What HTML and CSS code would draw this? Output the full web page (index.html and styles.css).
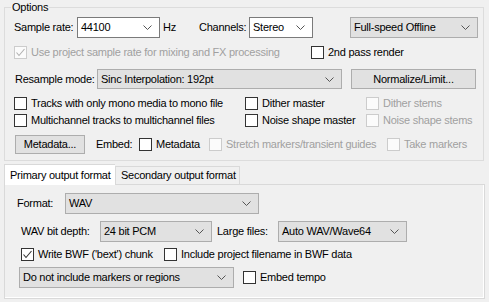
FILE: index.html
```html
<!DOCTYPE html>
<html lang="en">
<head>
  <meta charset="UTF-8">
  <title>Render options</title>
  <link rel="stylesheet" href="styles.css">
</head>
<body>
  <!-- Options group -->
  <fieldset class="group">
    <legend>Options</legend>

    <div class="row row-rate">
      <span class="lbl lbl-rate">Sample rate:</span>
      <div class="combo edit combo-rate">
        <span>44100</span>
        <svg class="chev" width="9" height="5" viewBox="0 0 9 5"><path d="M0.5 0.5 L4.5 4.5 L8.5 0.5"/></svg>
      </div>
      <span class="lbl lbl-hz">Hz</span>
      <span class="lbl lbl-chan">Channels:</span>
      <div class="combo edit combo-chan">
        <span>Stereo</span>
        <svg class="chev" width="9" height="5" viewBox="0 0 9 5"><path d="M0.5 0.5 L4.5 4.5 L8.5 0.5"/></svg>
      </div>
      <div class="combo list combo-speed">
        <span>Full-speed Offline</span>
        <svg class="chev" width="9" height="5" viewBox="0 0 9 5"><path d="M0.5 0.5 L4.5 4.5 L8.5 0.5"/></svg>
      </div>
    </div>

    <div class="row row-check row-project">
      <label class="check disabled item-project">
        <span class="box"><svg width="11" height="11" viewBox="0 0 11 11"><path d="M1.5 5.5 L4 8.5 L9.5 2"/></svg></span>
        Use project sample rate for mixing and FX processing
      </label>
      <label class="check">
        <span class="box"></span>
        2nd pass render
      </label>
    </div>

    <div class="row row-resample">
      <span class="lbl lbl-resample">Resample mode:</span>
      <div class="combo list combo-resample">
        <span>Sinc Interpolation: 192pt</span>
        <svg class="chev" width="9" height="5" viewBox="0 0 9 5"><path d="M0.5 0.5 L4.5 4.5 L8.5 0.5"/></svg>
      </div>
      <button class="btn btn-normalize">Normalize/Limit...</button>
    </div>

    <div class="row row-check row-mono">
      <label class="check col-1"><span class="box"></span>Tracks with only mono media to mono file</label>
      <label class="check col-2"><span class="box"></span>Dither master</label>
      <label class="check disabled"><span class="box"></span>Dither stems</label>
    </div>

    <div class="row row-check row-multi">
      <label class="check col-1"><span class="box"></span>Multichannel tracks to multichannel files</label>
      <label class="check col-2"><span class="box"></span>Noise shape master</label>
      <label class="check disabled"><span class="box"></span>Noise shape stems</label>
    </div>

    <div class="row row-meta">
      <button class="btn btn-meta">Metadata...</button>
      <span class="lbl lbl-embed">Embed:</span>
      <label class="check item-meta"><span class="box"></span>Metadata</label>
      <label class="check disabled item-stretch"><span class="box"></span>Stretch markers/transient guides</label>
      <label class="check disabled"><span class="box"></span>Take markers</label>
    </div>
  </fieldset>

  <!-- Output format tabs -->
  <div class="tabs">
    <div class="tab active">Primary output format</div>
    <div class="tab">Secondary output format</div>
  </div>

  <div class="panel">
    <div class="row row-format">
      <span class="lbl lbl-format">Format:</span>
      <div class="combo list combo-format">
        <span>WAV</span>
        <svg class="chev" width="9" height="5" viewBox="0 0 9 5"><path d="M0.5 0.5 L4.5 4.5 L8.5 0.5"/></svg>
      </div>
    </div>

    <div class="row row-depth">
      <span class="lbl lbl-depth">WAV bit depth:</span>
      <div class="combo list combo-depth">
        <span>24 bit PCM</span>
        <svg class="chev" width="9" height="5" viewBox="0 0 9 5"><path d="M0.5 0.5 L4.5 4.5 L8.5 0.5"/></svg>
      </div>
      <span class="lbl lbl-large">Large files:</span>
      <div class="combo list combo-large">
        <span>Auto WAV/Wave64</span>
        <svg class="chev" width="9" height="5" viewBox="0 0 9 5"><path d="M0.5 0.5 L4.5 4.5 L8.5 0.5"/></svg>
      </div>
    </div>

    <div class="row row-check row-bwf">
      <label class="check item-bwf">
        <span class="box"><svg width="11" height="11" viewBox="0 0 11 11"><path d="M1.5 5.5 L4 8.5 L9.5 2"/></svg></span>
        Write BWF ('bext') chunk
      </label>
      <label class="check"><span class="box"></span>Include project filename in BWF data</label>
    </div>

    <div class="row row-markers">
      <div class="combo list combo-markers">
        <span>Do not include markers or regions</span>
        <svg class="chev" width="9" height="5" viewBox="0 0 9 5"><path d="M0.5 0.5 L4.5 4.5 L8.5 0.5"/></svg>
      </div>
      <label class="check"><span class="box"></span>Embed tempo</label>
    </div>
  </div>
</body>
</html>
```

FILE: styles.css
```css
body {
  margin: 0;
  padding: 0;
  width: 489px;
  height: 302px;
  overflow: hidden;
  background-color: #f0f0f0;
  color: #000;
  font-family: "Liberation Sans", Arial, sans-serif;
  font-size: 11px;
  letter-spacing: -0.25px;
  line-height: 13px;
}

/* group box */
.group {
  margin: 1px 5px 0 4px;
  padding: 3px 0 6px 9px;
  border: 1px solid #dcdcdc;
  min-width: 0;
}
.group legend {
  margin-left: -3px;
  padding: 0 1px;
}

.row {
  display: flex;
  align-items: center;
  white-space: nowrap;
}
.row-rate { height: 21px; }
.row-project { margin-top: 8px; }
.row-resample { height: 20px; margin-top: 10px; }
.row-mono { margin-top: 8px; }
.row-multi { margin-top: 4px; }
.row-meta { height: 19px; margin-top: 8px; }

.lbl { display: inline-block; }
.lbl-rate { width: 63px; }
.lbl-hz { width: 36px; margin-left: 3px; }
.lbl-chan { width: 50px; }
.lbl-resample { width: 82px; margin-left: 1px; }
.lbl-embed { width: 43px; margin-left: 11px; }

/* combo boxes */
.combo {
  display: flex;
  align-items: center;
  justify-content: space-between;
  box-sizing: border-box;
  height: 21px;
  padding: 0 7px 0 3px;
}
.combo.edit {
  background: #fff;
  border: 1px solid #7a7a7a;
}
.combo.list {
  background: #e1e1e1;
  border: 1px solid #adadad;
}
.chev {
  flex: none;
}
.chev path {
  fill: none;
  stroke: #555;
  stroke-width: 1;
}
.combo-rate { width: 83px; }
.combo-chan { width: 64px; }
.combo-speed { width: 128px; margin-left: 37px; }
.combo-resample { width: 245px; height: 20px; }

/* buttons */
.btn {
  box-sizing: border-box;
  height: 20px;
  padding: 0;
  background: #e1e1e1;
  border: 1px solid #adadad;
  font: inherit;
  letter-spacing: inherit;
  color: #000;
}
.btn-normalize { width: 125px; margin-left: 9px; }
.btn-meta { width: 70px; height: 19px; margin-left: 1px; }

/* checkboxes */
.check {
  display: flex;
  align-items: center;
  gap: 4px;
  height: 13px;
}
.check .box {
  display: flex;
  align-items: center;
  justify-content: center;
  box-sizing: border-box;
  width: 13px;
  height: 13px;
  flex: none;
  background: #fff;
  border: 1px solid #333;
}
.check .box path {
  fill: none;
  stroke: #333;
  stroke-width: 1.1;
}
.check.disabled {
  color: #a0a0a0;
}
.check.disabled .box {
  border-color: #cccccc;
  background: #fbfbfb;
}
.check.disabled .box path {
  stroke: #b0b0b0;
}
.item-project { width: 297px; }
.col-1 { width: 231px; }
.col-2 { width: 121px; }
.item-meta { width: 70px; }
.item-stretch { width: 178px; }

/* tabs */
.tabs {
  display: flex;
  align-items: flex-end;
  height: 20px;
  margin: 3px 0 0 4px;
}
.tab {
  box-sizing: border-box;
  height: 18px;
  width: 125px;
  padding-left: 5px;
  display: flex;
  align-items: center;
  border: 1px solid #d9d9d9;
  border-bottom: none;
  background: #f0f0f0;
}
.tab.active {
  position: relative;
  z-index: 1;
  width: 111px;
  height: 21px;
  margin-bottom: -1px;
  background: #fff;
  border-right: none;
}

.panel {
  box-sizing: border-box;
  height: 115px;
  margin: 0 4px 0 4px;
  padding-top: 8px;
  border: 1px solid #d9d9d9;
  box-shadow: inset -1px -1px 0 #fff;
}
.row-format { height: 21px; }
.row-depth { height: 21px; margin-top: 7px; }
.row-bwf { margin-top: 6px; }
.row-markers { height: 21px; margin-top: 6px; }

.lbl-format { width: 48px; margin-left: 12px; }
.lbl-depth { width: 79px; margin-left: 16px; }
.lbl-large { width: 61px; margin-left: 5px; }
.combo-format { width: 194px; }
.combo-depth { width: 112px; }
.combo-large { width: 129px; }
.combo-markers { width: 215px; margin-left: 14px; margin-right: 9px; }
.item-bwf { width: 143px; margin-left: 16px; }
```
